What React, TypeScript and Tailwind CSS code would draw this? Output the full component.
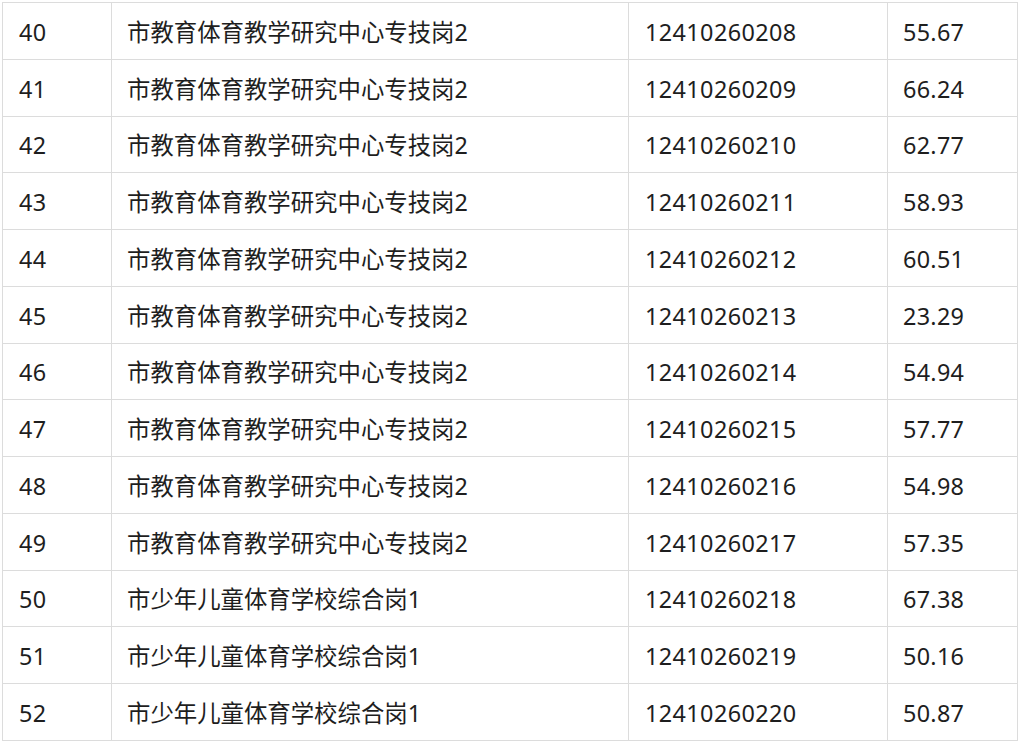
import React from "react";

const rows: [string, string, string, string][] = [
  ["40", "市教育体育教学研究中心专技岗2", "12410260208", "55.67"],
  ["41", "市教育体育教学研究中心专技岗2", "12410260209", "66.24"],
  ["42", "市教育体育教学研究中心专技岗2", "12410260210", "62.77"],
  ["43", "市教育体育教学研究中心专技岗2", "12410260211", "58.93"],
  ["44", "市教育体育教学研究中心专技岗2", "12410260212", "60.51"],
  ["45", "市教育体育教学研究中心专技岗2", "12410260213", "23.29"],
  ["46", "市教育体育教学研究中心专技岗2", "12410260214", "54.94"],
  ["47", "市教育体育教学研究中心专技岗2", "12410260215", "57.77"],
  ["48", "市教育体育教学研究中心专技岗2", "12410260216", "54.98"],
  ["49", "市教育体育教学研究中心专技岗2", "12410260217", "57.35"],
  ["50", "市少年儿童体育学校综合岗1", "12410260218", "67.38"],
  ["51", "市少年儿童体育学校综合岗1", "12410260219", "50.16"],
  ["52", "市少年儿童体育学校综合岗1", "12410260220", "50.87"],
];

export default function App() {
  return (
    <div
      className="w-[1020px] h-[744px] overflow-hidden bg-white pl-[2px] pt-[2px]"
      style={{ fontFamily: '"Noto Sans", "Noto Sans CJK SC", sans-serif' }}
    >
      <div className="w-[1016px] border-l border-t border-[#dcdcdc] text-[23.4px] text-[#1e1e1e]">
        {rows.map((r) => (
          <div key={r[0]} className="grid grid-cols-[109px_517px_259px_130px] h-[56.77px]">
            <div className="border-r border-b border-[#dcdcdc] flex items-center pl-[16px] pt-[3px] tracking-[0.3px]">{r[0]}</div>
            <div className="border-r border-b border-[#dcdcdc] flex items-center pl-[15px] pt-[3px]">{r[1]}</div>
            <div className="border-r border-b border-[#dcdcdc] flex items-center pl-[16px] pt-[3px] tracking-[0.4px]">{r[2]}</div>
            <div className="border-r border-b border-[#dcdcdc] flex items-center pl-[15px] pt-[3px] tracking-[0.3px]">{r[3]}</div>
          </div>
        ))}
      </div>
    </div>
  );
}
